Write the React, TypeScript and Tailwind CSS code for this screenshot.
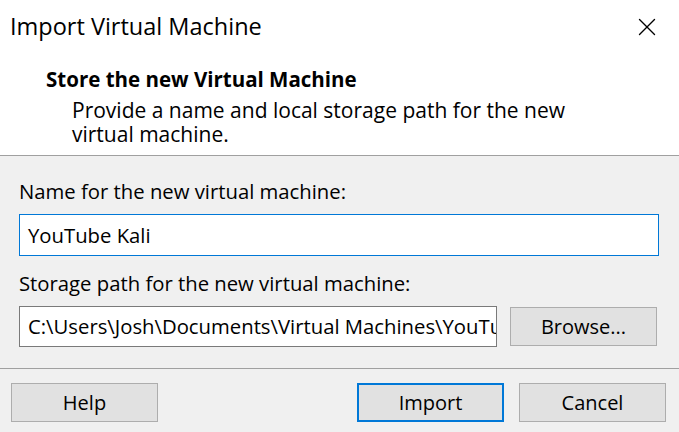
import { X } from 'lucide-react'

const FONT = { fontFamily: '"Open Sans", "Noto Sans", sans-serif' }

function Button({ label, primary }: { label: string; primary?: boolean }) {
  return (
    <div
      className={`flex h-[39px] w-[147px] items-center justify-center bg-[#e1e1e1] text-[20px] text-black ${
        primary ? 'border-2 border-[#0078d7]' : 'border border-[#adadad]'
      }`}
    >
      {label}
    </div>
  )
}

export default function App() {
  return (
    <div className="flex h-[432px] w-[679px] flex-col overflow-hidden bg-[#f0f0f0] text-black" style={FONT}>
      {/* title bar + header */}
      <div className="border-b border-[#a0a0a0] bg-white">
        <div className="flex h-[54px] items-center justify-between pl-[10px] pr-[17px]">
          <span className="text-[23.5px]">Import Virtual Machine</span>
          <X className="h-[30px] w-[30px]" strokeWidth={1.1} />
        </div>
        <div className="pb-[9px] pl-[46px] pt-[12px]">
          <div className="text-[20.5px] font-bold leading-[26px]">Store the new Virtual Machine</div>
          <p className="mt-[6px] pl-[26px] text-[21px] leading-[24px]">
            Provide a name and local storage path for the new
            <br />
            virtual machine.
          </p>
        </div>
      </div>

      {/* body */}
      <div className="flex flex-col px-[19px] pt-[22px]">
        <label className="text-[20.3px] leading-[26px]">Name for the new virtual machine:</label>
        <div className="mt-[10px] flex h-[42px] w-[640px] items-center border border-[#0078d7] bg-white px-[8px] text-[20.3px]">
          YouTube Kali
        </div>
        <label className="mt-[14px] text-[20.3px] leading-[26px]">Storage path for the new virtual machine:</label>
        <div className="mt-[10px] flex items-center gap-[13px]">
          <div className="flex h-[41px] w-[478px] items-center overflow-hidden whitespace-nowrap border border-[#7a7a7a] bg-white px-[8px] text-[20.3px]">
            C:\Users\Josh\Documents\Virtual Machines\YouTube Kali
          </div>
          <Button label="Browse..." />
        </div>
      </div>

      <div className="mt-[21px] border-t border-[#a0a0a0]" />

      <div className="flex items-center pl-[11px] pt-[14px]">
        <Button label="Help" />
        <div className="ml-auto flex gap-[15px] pr-[13px]">
          <Button label="Import" primary />
          <Button label="Cancel" />
        </div>
      </div>
    </div>
  )
}
